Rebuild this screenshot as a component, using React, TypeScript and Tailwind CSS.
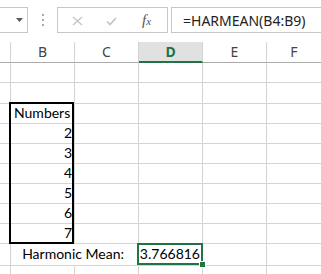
import React from "react";

const cols = ["", "B", "C", "D", "E", "F"];

const rowCount = 11;

function Toolbar() {
  return (
    <div className="h-[42px] flex items-start pt-[7px]">
      {/* name box */}
      <div className="w-[28px] h-[26px] border border-l-0 border-[#c6c6c6] flex items-center justify-end pr-[4px]">
        <svg width="7" height="4" viewBox="0 0 7 4">
          <polygon points="0,0 7,0 3.5,4" fill="#5a5a5a" />
        </svg>
      </div>
      {/* grip dots */}
      <div className="w-[29px] h-[26px] flex flex-col items-center justify-center gap-[3px]">
        <span className="w-[2px] h-[2px] bg-[#a8a8a8]" />
        <span className="w-[2px] h-[2px] bg-[#a8a8a8]" />
        <span className="w-[2px] h-[2px] bg-[#a8a8a8]" />
      </div>
      {/* cancel / enter / insert function */}
      <div className="w-[111px] h-[26px] border border-[#c6c6c6] flex items-center pl-[14px]">
        <svg width="11" height="10" viewBox="0 0 11 10" className="mt-[1px]">
          <path d="M1 1 L10 9 M10 1 L1 9" stroke="#c2c2c2" strokeWidth="1.2" fill="none" />
        </svg>
        <svg width="11" height="9" viewBox="0 0 11 9" className="ml-[23px] mt-[3px]">
          <path d="M1 4.5 L4 7.5 L10 1" stroke="#c2c2c2" strokeWidth="1.6" fill="none" />
        </svg>
        <span className="ml-[25px] font-['Liberation_Serif',serif] italic text-[#555] text-[15px] leading-none">
          f<span className="text-[11px]">x</span>
        </span>
      </div>
      {/* formula */}
      <div className="ml-[3px] flex-1 h-[26px] border border-r-0 border-[#c6c6c6] flex items-center pl-[11px] font-['Noto_Sans',sans-serif] text-[14px] text-[#222]">
        =HARMEAN(B4:B9)
      </div>
    </div>
  );
}

function Sheet() {
  const cells: React.ReactNode[] = [];

  // column headers
  cols.forEach((c, i) => {
    const isD = c === "D";
    cells.push(
      <div
        key={"h" + i}
        className={
          "flex items-center justify-center font-['Noto_Sans',sans-serif] text-[14px] " +
          (i < cols.length - 1 ? "border-r border-[#d4d4d4] " : "") +
          (isD
            ? "bg-[#e1e1e1] border-b-2 border-b-[#217346] text-[#217346] font-bold"
            : "border-b border-b-[#ababab] text-[#444]")
        }
      >
        {c}
      </div>
    );
  });

  for (let r = 1; r <= rowCount; r++) {
    const last = r === rowCount;
    const base = "border-r border-[#d4d4d4] " + (last ? "" : "border-b ");
    if (r === 10) {
      cells.push(<div key={r + "-0"} className={base} />);
      cells.push(
        <div key={r + "-1"} className={base + "col-span-2 flex items-end justify-end pr-[14px] pb-[2px]"}>
          Harmonic Mean:
        </div>
      );
      cells.push(
        <div key={r + "-3"} className={base + "flex items-end justify-end pr-[2px] pb-[2px]"}>
          3.766816
        </div>
      );
      cells.push(<div key={r + "-4"} className={base} />);
      cells.push(<div key={r + "-5"} className="border-b border-[#d4d4d4]" />);
      continue;
    }
    for (let c = 0; c < cols.length; c++) {
      let content: React.ReactNode = null;
      let align = "";
      if (c === 1 && r === 3) {
        content = "Numbers";
        align = "justify-start pl-[3px]";
      } else if (c === 1 && r >= 4 && r <= 9) {
        content = String(r - 2);
        align = "justify-end pr-[2px]";
      }
      cells.push(
        <div
          key={r + "-" + c}
          className={
            (c < cols.length - 1 ? base : last ? "" : "border-b border-[#d4d4d4] ") +
            "flex items-end pb-[1px] " +
            align
          }
        >
          {content}
        </div>
      );
    }
  }

  return (
    <div className="relative grid grid-cols-[11px_64px_64px_64px_64px_1fr] grid-rows-[21px_20px_21px_20px_20px_20px_20px_20px_20px_20px_22px_1fr] h-[232px] font-['Lato',sans-serif] text-[14px] leading-[18px] text-black">
      {cells}
      {/* outline around B3:B9 */}
      <div className="absolute left-[9px] top-[60px] w-[65px] h-[142px] border-2 border-black pointer-events-none" />
      {/* active cell D10 */}
      <div className="absolute left-[137px] top-[201px] w-[66px] h-[22px] border-2 border-[#217346] pointer-events-none" />
      <div className="absolute left-[199px] top-[219px] w-[7px] h-[7px] bg-[#217346] border border-white" />
    </div>
  );
}

export default function App() {
  return (
    <div className="w-[321px] h-[274px] overflow-hidden bg-white">
      <Toolbar />
      <Sheet />
    </div>
  );
}
